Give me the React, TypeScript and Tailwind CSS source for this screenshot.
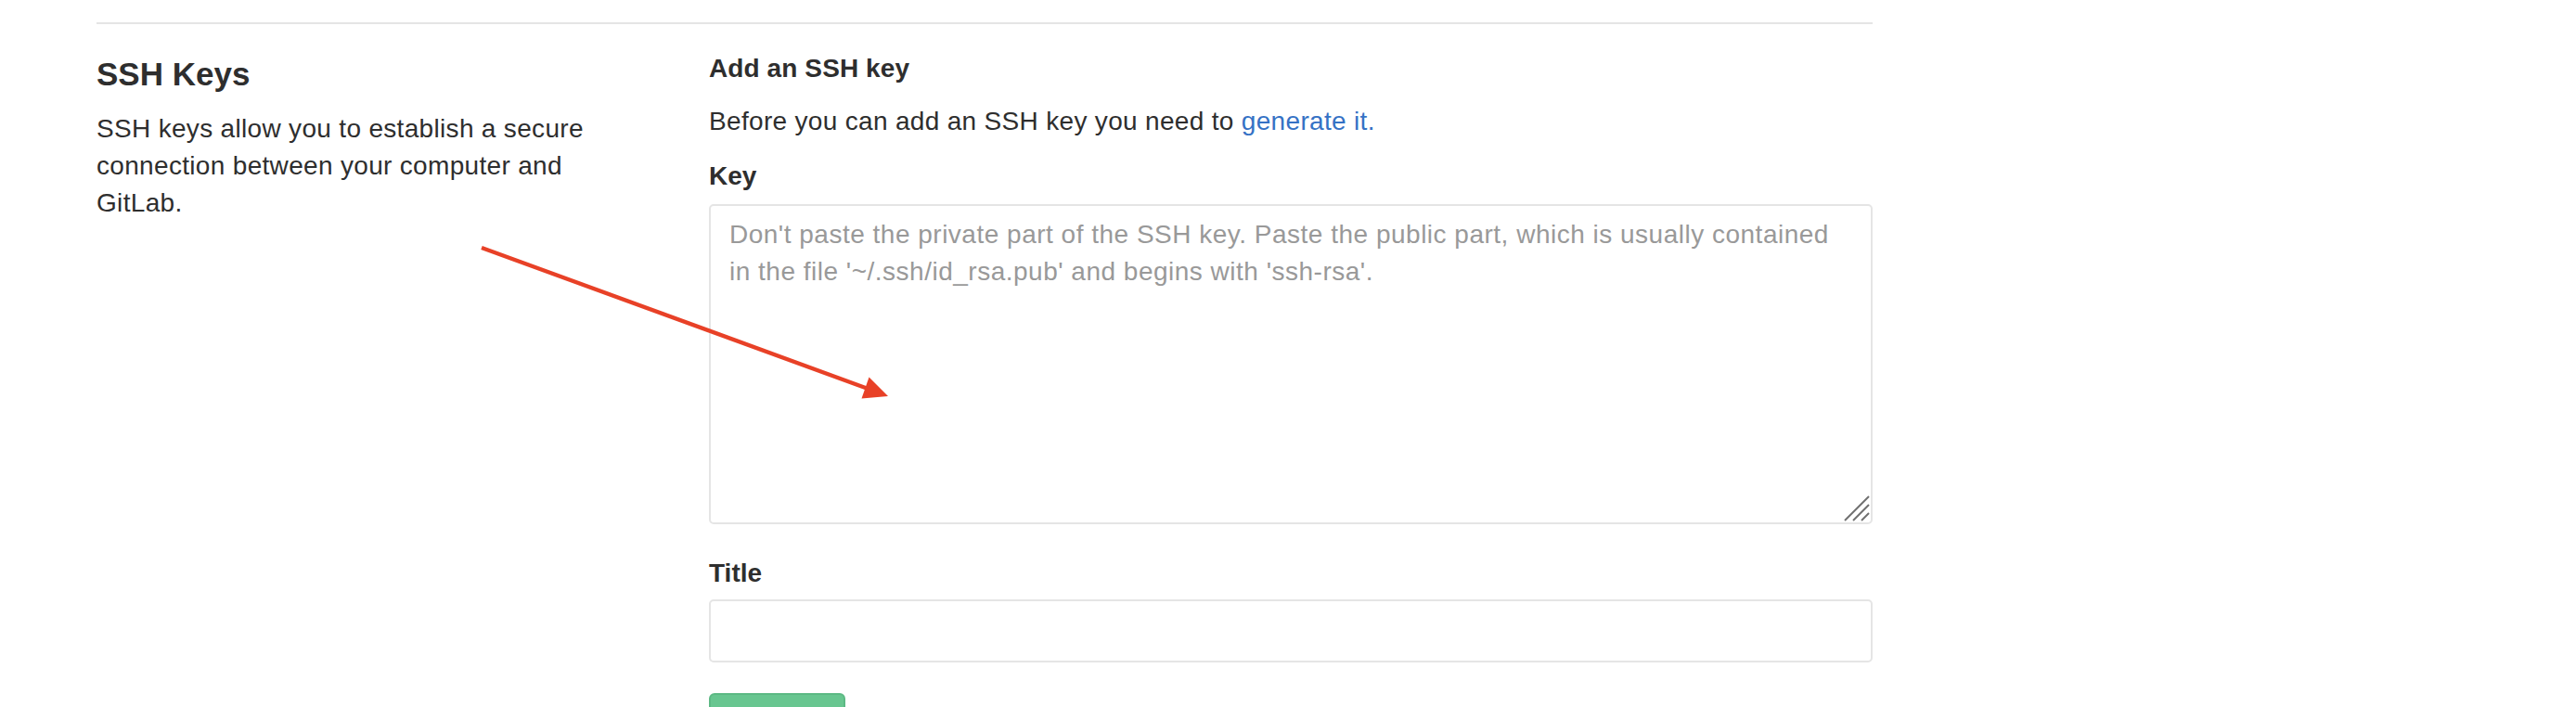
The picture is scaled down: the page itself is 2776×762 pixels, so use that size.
import React from "react";

export default function App() {
  return (
    <div className="relative w-full h-[762px] overflow-hidden bg-white font-['Liberation_Sans',Arial,sans-serif] text-[#2e2e2e]">
      <div className="pl-[104px] pt-[24px]">
        <div className="w-[1914px]">
          <div className="border-t-2 border-[#e5e5e5]" />
          <div className="mt-[28px] flex gap-[62px]">
            <div className="w-[598px] shrink-0">
              <h4 className="mt-[6px] text-[35px] leading-[40px] font-bold">SSH Keys</h4>
              <p className="mt-[19px] text-[28px] leading-[40px] tracking-[0.32px]">
                SSH keys allow you to establish a secure connection between your computer and GitLab.
              </p>
            </div>
            <div className="flex-1 min-w-0">
              <h5 className="text-[28px] leading-[40px] font-bold tracking-[0.1px]">Add an SSH key</h5>
              <p className="mt-[17px] text-[28px] leading-[40px] tracking-[0.32px]">
                Before you can add an SSH key you need to{" "}
                <a href="#" className="text-[#3572c5]">generate it.</a>
              </p>
              <label className="mt-[19px] block text-[28px] leading-[40px] font-bold">Key</label>
              <div className="relative mt-[10px]">
                <textarea
                  className="block w-full h-[345px] resize-none rounded-[5px] border-2 border-[#e5e5e5] bg-white px-[20px] pt-[11px] text-[28px] leading-[40px] tracking-[0.5px] outline-none placeholder:text-[#999] font-['Liberation_Sans',Arial,sans-serif]"
                  placeholder="Don't paste the private part of the SSH key. Paste the public part, which is usually contained in the file '~/.ssh/id_rsa.pub' and begins with 'ssh-rsa'."
                />
                <svg
                  className="absolute right-[3px] bottom-[3px]"
                  width="28"
                  height="28"
                  viewBox="0 0 28 28"
                >
                  <line x1="1" y1="27" x2="27" y2="1" stroke="#6f6f6f" strokeWidth="2" />
                  <line x1="10" y1="27" x2="27" y2="10" stroke="#6f6f6f" strokeWidth="2" />
                  <line x1="19" y1="27" x2="27" y2="19" stroke="#6f6f6f" strokeWidth="2" />
                </svg>
              </div>
              <label className="mt-[33px] block text-[28px] leading-[40px] font-bold">Title</label>
              <input
                type="text"
                className="mt-[8px] block w-full h-[68px] rounded-[5px] border-2 border-[#e5e5e5] bg-white px-[20px] text-[28px] outline-none"
              />
              <button className="mt-[33px] flex items-end justify-center pb-[2px] w-[147px] h-[68px] rounded-[6px] border-2 border-[#5cb984] bg-[#68c690] text-white text-[28px] leading-[32px] font-bold">
                Add key
              </button>
            </div>
          </div>
        </div>
      </div>
      <svg
        className="pointer-events-none absolute left-0 top-0"
        width="2776"
        height="762"
        viewBox="0 0 2776 762"
      >
        <line x1="519" y1="267" x2="934" y2="418.5" stroke="#e84127" strokeWidth="4.5" />
        <polygon points="957,427 936.5,406.5 928.5,429.5" fill="#e84127" />
      </svg>
    </div>
  );
}
